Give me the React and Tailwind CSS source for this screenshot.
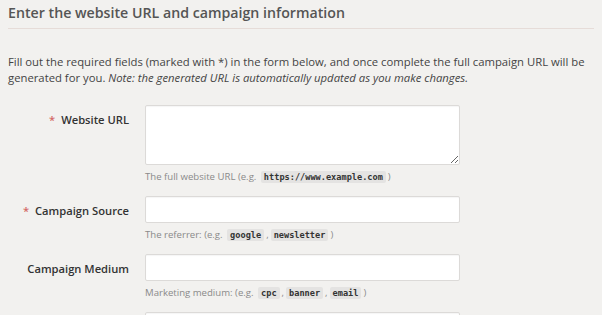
import React from 'react';

const fields = [
    {
        label: 'Website URL',
        required: true,
        multiline: true,
        help: 'The full website URL (e.g.',
        codes: ['https://www.example.com'],
    },
    {
        label: 'Campaign Source',
        required: true,
        help: 'The referrer: (e.g.',
        codes: ['google', 'newsletter'],
    },
    {
        label: 'Campaign Medium',
        required: false,
        help: 'Marketing medium: (e.g.',
        codes: ['cpc', 'banner', 'email'],
    },
    {
        label: 'Campaign Name',
        required: false,
        help: 'Product, promo code, or slogan (e.g.',
        codes: ['spring_sale'],
    },
];

const Code = ({ children }) => (
    <code className="mx-[2px] rounded-[2px] bg-[#e4e3e2] px-[3px] py-[1px] font-['DejaVu_Sans_Mono',monospace] text-[8.6px] font-bold text-[#333]">
        {children}
    </code>
);

const FieldRow = ({ field }) => (
    <div className="mb-[11px] flex items-start gap-[16px]">
        {/* Label */}
        <label className="w-[121px] shrink-0 pt-[7px] text-right text-[11.2px] leading-[16px] font-semibold text-[#333]">
            {field.required && <span className="mr-[6px] text-[#d46a66]">*</span>}
            {field.label}
        </label>

        {/* Control + help */}
        <div className="w-[315px]">
            {field.multiline ? (
                <textarea className="block h-[60px] w-full rounded-[2px] border border-[#dcdad8] bg-white shadow-[inset_0_1px_1px_rgba(0,0,0,0.04)] outline-none" />
            ) : (
                <input className="block h-[27px] w-full rounded-[2px] border border-[#dcdad8] bg-white shadow-[inset_0_1px_1px_rgba(0,0,0,0.04)] outline-none" />
            )}
            <p className="mt-[4px] text-[9.6px] leading-[15px] text-[#8a8a8a]">
                {field.help}{' '}
                {field.codes.map((c, i) => (
                    <React.Fragment key={c}>
                        <Code>{c}</Code>
                        {i < field.codes.length - 1 ? ',' : ''}
                    </React.Fragment>
                ))}
                )
            </p>
        </div>
    </div>
);

export default function App() {
    return (
        <div className="min-h-[315px] w-full bg-[#f2f1ef] px-[8px] font-['Open_Sans',sans-serif]">
            {/* Header */}
            <h2 className="border-b border-[#e6dcd8] pt-[3px] pb-[5px] text-[14.2px] leading-[20px] font-semibold text-[#555]">
                Enter the website URL and campaign information
            </h2>

            {/* Intro */}
            <p className="mt-[25px] text-[11.3px] leading-[16px] text-[#444]">
                Fill out the required fields (marked with *) in the form below, and once complete the full campaign URL will be
                generated for you. <em>Note: the generated URL is automatically updated as you make changes.</em>
            </p>

            {/* Form */}
            <div className="mt-[19px]">
                {fields.map((f) => (
                    <FieldRow key={f.label} field={f} />
                ))}
            </div>
        </div>
    );
}
